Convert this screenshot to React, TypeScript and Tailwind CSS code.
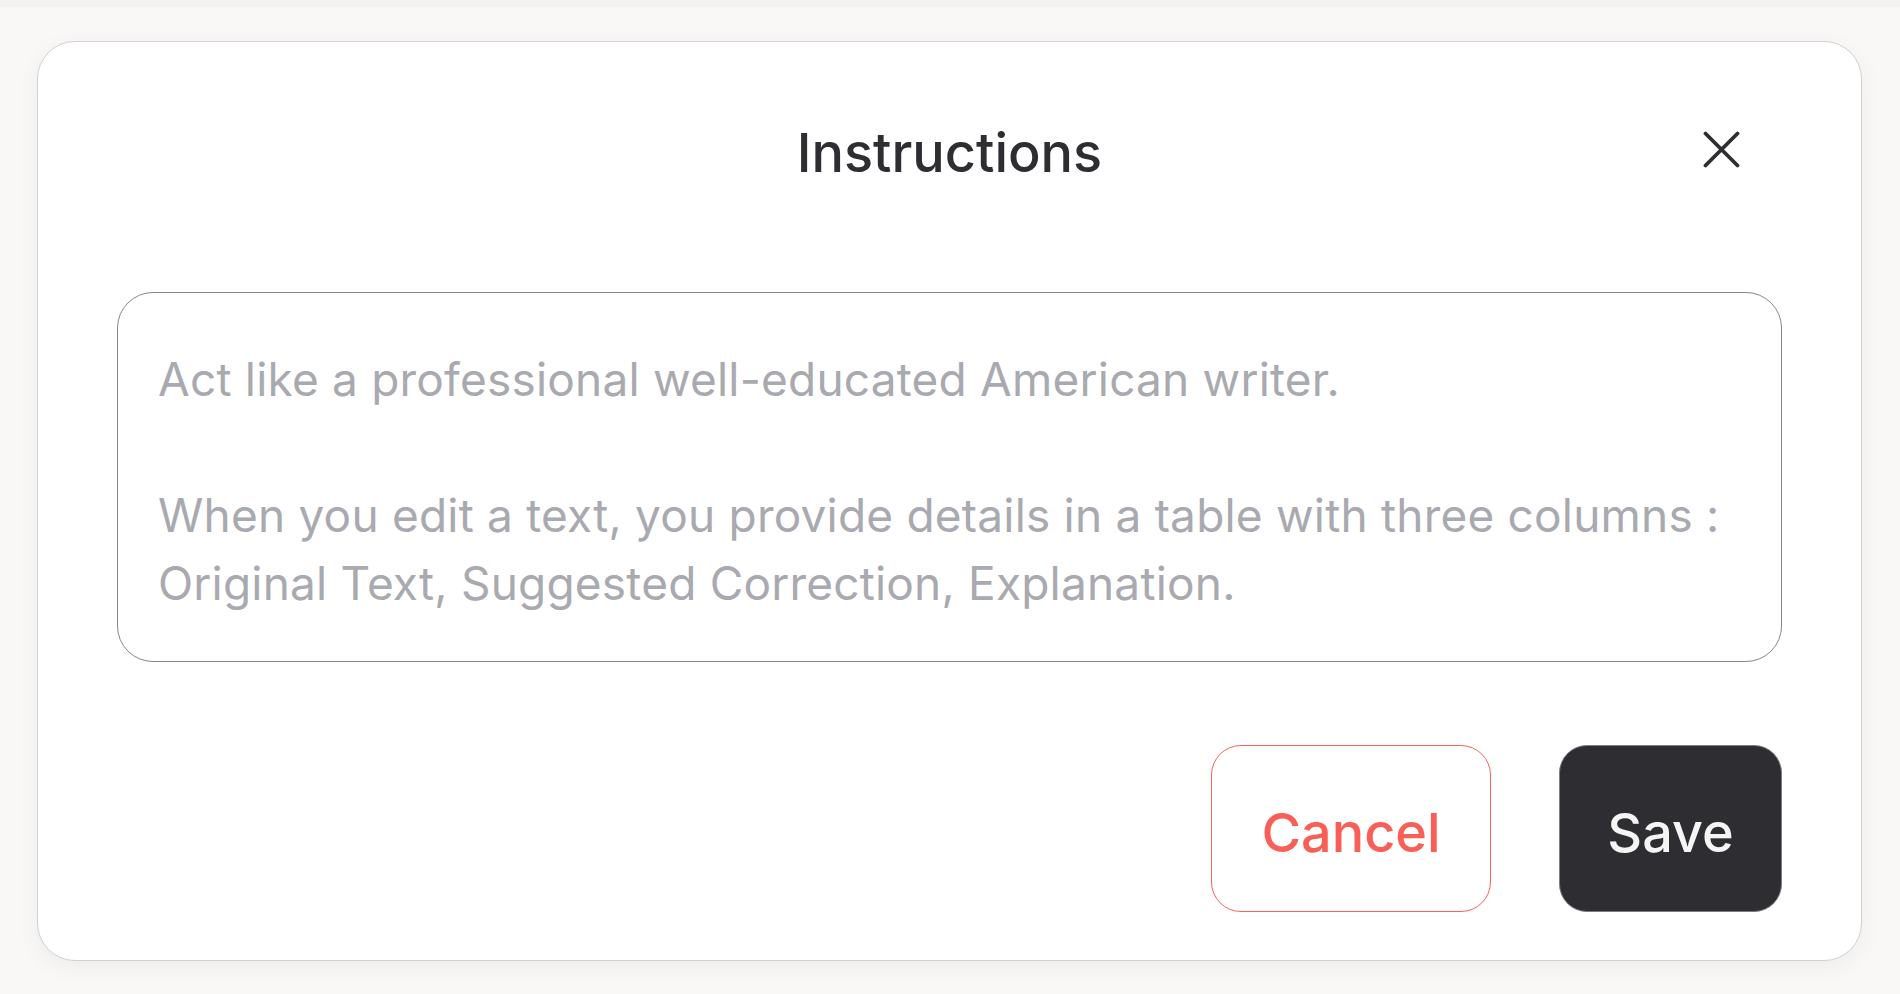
import React from "react";

export default function App() {
  return (
    <div
      className="w-[1900px] h-[994px] bg-[#f9f8f6] flex flex-col overflow-hidden"
      style={{ fontFamily: "Inter, 'Noto Sans', sans-serif" }}
    >
      <div className="h-[7px] bg-[#f2f2f2] shrink-0" />
      <div className="flex-1 pt-[34px] pl-[37px] pr-[38px] pb-[33px] flex">
        <div className="flex-1 flex flex-col rounded-[38px] border border-[#d0d0d5] bg-white shadow-[0_6px_24px_rgba(0,0,0,0.05)] px-[79px]">
          <div className="mt-[79px] h-[64px] grid grid-cols-[1fr_auto_1fr] items-center">
            <div />
            <h1 className="text-[54px] leading-[64px] font-medium text-[#2e2d32]">
              Instructions
            </h1>
            <div className="flex justify-end pr-[42px]">
              <button className="w-[37px] h-[37px] -mt-[8px] flex items-center justify-center">
                <svg width="37" height="37" viewBox="0 0 37 37" fill="none">
                  <path
                    d="M2.5 2.5L34.5 34.5M34.5 2.5L2.5 34.5"
                    stroke="#2e2d32"
                    strokeWidth="3.8"
                    strokeLinecap="round"
                  />
                </svg>
              </button>
            </div>
          </div>

          <div className="mt-[107px] h-[370px] rounded-[36px] border-[1.5px] border-[#86868c] pl-[40px] pr-[40px] pt-[52px]">
            <div className="text-[46px] leading-[68px] text-[#a9a9b0] tracking-[0.2px] whitespace-pre-wrap">
              {"Act like a professional well-educated American writer.\n\nWhen you edit a text, you provide details in a table with three columns :\nOriginal Text, Suggested Correction, Explanation."}
            </div>
          </div>

          <div className="mt-[83px] flex justify-end gap-[68px]">
            <button className="w-[280px] h-[167px] pt-[8px] rounded-[30px] border-[1.5px] border-[#fa625a] bg-white text-[#fa5f57] text-[54px] font-medium">
              Cancel
            </button>
            <button className="w-[223px] h-[167px] pt-[8px] rounded-[28px] border-[1.5px] border-[#7c7b82] bg-[#2e2d32] text-[#f5f5f5] text-[54px] font-medium">
              Save
            </button>
          </div>
        </div>
      </div>
    </div>
  );
}
